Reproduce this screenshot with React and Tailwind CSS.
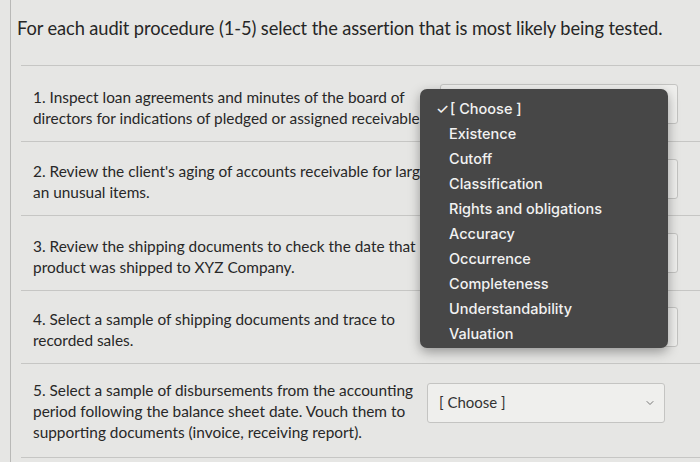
import { ChevronDown } from 'lucide-react';

const rows = [
  { text: "1. Inspect loan agreements and minutes of the board of directors for indications of pledged or assigned receivables.", h: 'h-[76px]', pad: 'pt-[8px]' },
  { text: "2. Review the client's aging of accounts receivable for large an unusual items.", h: 'h-[74px]', pad: 'pt-[6px]' },
  { text: "3. Review the shipping documents to check the date that product was shipped to XYZ Company.", h: 'h-[75px]', pad: 'pt-[8px]' },
  { text: "4. Select a sample of shipping documents and trace to recorded sales.", h: 'h-[73px]', pad: 'pt-[6px]' },
  { text: "5. Select a sample of disbursements from the accounting period following the balance sheet date. Vouch them to supporting documents (invoice, receiving report).", h: 'h-[95px]', pad: 'pt-[2px]' },
];

const options = [
  'Existence',
  'Cutoff',
  'Classification',
  'Rights and obligations',
  'Accuracy',
  'Occurrence',
  'Completeness',
  'Understandability',
  'Valuation',
];

function SelectBox() {
  return (
    <div className="w-[238px] h-[40px] shrink-0 border border-[#c4c4c2] bg-[#efefed] rounded-[3px] flex items-center justify-between pl-[11px] pr-[8px] text-[15px] text-[#333]">
      <span>[ Choose ]</span>
      <ChevronDown className="w-[12px] h-[12px] text-[#777]" strokeWidth={2} />
    </div>
  );
}

export default function App() {
  return (
    <div className="relative w-[700px] h-[462px] overflow-hidden bg-[#e6e6e4] pl-[10px] font-['Lato','Noto_Sans',sans-serif]">
      <div className="h-full border-l border-[#b9b9b7]">
        <p className="pt-[15px] pl-[6px] h-[65px] text-[18.3px] text-[#262626] tracking-[-0.1px]">
          For each audit procedure (1-5) select the assertion that is most likely being tested.
        </p>
        <div className="ml-[10px]">
          {rows.map((r, i) => (
            <div key={i} className={`${r.h} border-t border-[#c6c6c4] flex items-center justify-between pr-[22px] ${i === 4 ? 'border-b' : ''}`}>
              <p className={`w-[405px] ml-[12px] text-[15.4px] leading-[21px] text-[#282828] ${r.pad}`}>{r.text}</p>
              <div className={i === 4 ? 'mb-[16px] mr-[13px]' : ''}>
                <SelectBox />
              </div>
            </div>
          ))}
        </div>
      </div>

      {/* open dropdown menu */}
      <div className="absolute left-[420px] top-[89px] w-[248px] h-[259px] bg-[#474747] rounded-[7px] shadow-[0_4px_12px_rgba(0,0,0,0.35)] pt-[7px] font-['Inter','Liberation_Sans',sans-serif] text-[14.5px] font-medium text-[#f2f2f2]">
        <div className="relative h-[25px] leading-[25px] pl-[30px]">
          <span className="absolute left-[16px] top-0">✓</span>
          [ Choose ]
        </div>
        {options.map((o) => (
          <div key={o} className="h-[25px] leading-[25px] pl-[29px]">{o}</div>
        ))}
      </div>
    </div>
  );
}
